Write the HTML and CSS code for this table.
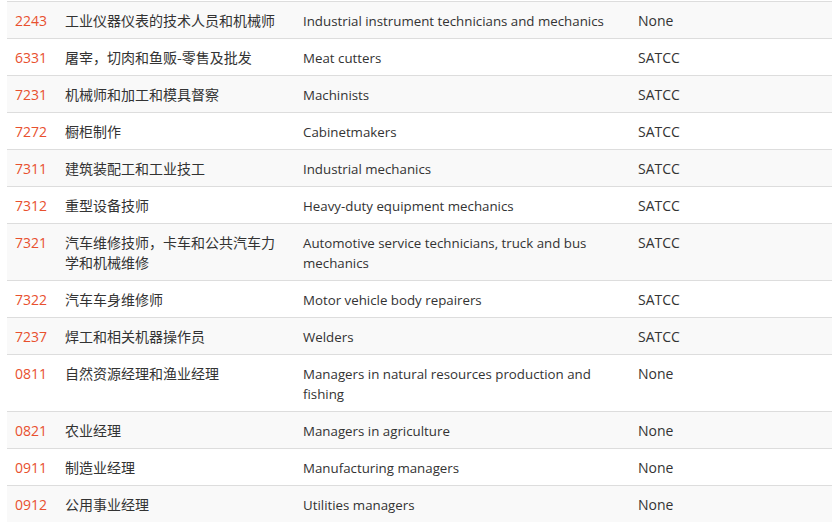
FILE: index.html
```html
<!DOCTYPE html>
<html lang="zh">
<head>
<meta charset="utf-8">
<link rel="stylesheet" href="styles.css">
</head>
<body>
<div class="wrap">
<table class="occ">
<colgroup><col class="c1"><col class="c2"><col class="c3"><col class="c4"></colgroup>
<tbody>
<tr><td class="code">2243</td><td class="zh">工业仪器仪表的技术人员和机械师</td><td class="en">Industrial instrument technicians and mechanics</td><td>None</td></tr>
<tr><td class="code">6331</td><td class="zh">屠宰，切肉和鱼贩-零售及批发</td><td class="en">Meat cutters</td><td>SATCC</td></tr>
<tr><td class="code">7231</td><td class="zh">机械师和加工和模具督察</td><td class="en">Machinists</td><td>SATCC</td></tr>
<tr><td class="code">7272</td><td class="zh">橱柜制作</td><td class="en">Cabinetmakers</td><td>SATCC</td></tr>
<tr><td class="code">7311</td><td class="zh">建筑装配工和工业技工</td><td class="en">Industrial mechanics</td><td>SATCC</td></tr>
<tr><td class="code">7312</td><td class="zh">重型设备技师</td><td class="en">Heavy-duty equipment mechanics</td><td>SATCC</td></tr>
<tr><td class="code">7321</td><td class="zh">汽车维修技师，卡车和公共汽车力学和机械维修</td><td class="en">Automotive service technicians, truck and bus mechanics</td><td>SATCC</td></tr>
<tr><td class="code">7322</td><td class="zh">汽车车身维修师</td><td class="en">Motor vehicle body repairers</td><td>SATCC</td></tr>
<tr><td class="code">7237</td><td class="zh">焊工和相关机器操作员</td><td class="en">Welders</td><td>SATCC</td></tr>
<tr><td class="code">0811</td><td class="zh">自然资源经理和渔业经理</td><td class="en">Managers in natural resources production and fishing</td><td>None</td></tr>
<tr><td class="code">0821</td><td class="zh">农业经理</td><td class="en">Managers in agriculture</td><td>None</td></tr>
<tr><td class="code">0911</td><td class="zh">制造业经理</td><td class="en">Manufacturing managers</td><td>None</td></tr>
<tr><td class="code">0912</td><td class="zh">公用事业经理</td><td class="en">Utilities managers</td><td>None</td></tr>
</tbody>
</table>
</div>
</body>
</html>
```
FILE: styles.css
```css
html, body {
  margin: 0;
  padding: 0;
  background: #fff;
}
body {
  font-family: "Open Sans", "Noto Sans CJK SC", sans-serif;
  font-size: 14px;
  line-height: 20px;
  color: #333;
}
.wrap {
  padding: 1px 8px 0 7px;
}
.occ {
  width: 825px;
  border-collapse: collapse;
  border-spacing: 0;
  table-layout: fixed;
}
.c1 { width: 50px; }
.c2 { width: 238px; }
.c3 { width: 335px; }
.c4 { width: 202px; }
.occ td {
  padding: 9px 8px 7px;
  vertical-align: top;
  border-top: 1px solid #ddd;
}
.occ tr:nth-child(odd) td {
  background: #f9f9f9;
}
.occ td.code {
  color: #e8502e;
}
.occ td.zh {
  padding: 8px;
  font-family: "Noto Sans CJK SC", sans-serif;
}
.occ td.en {
  font-size: 13.3px;
}
```
